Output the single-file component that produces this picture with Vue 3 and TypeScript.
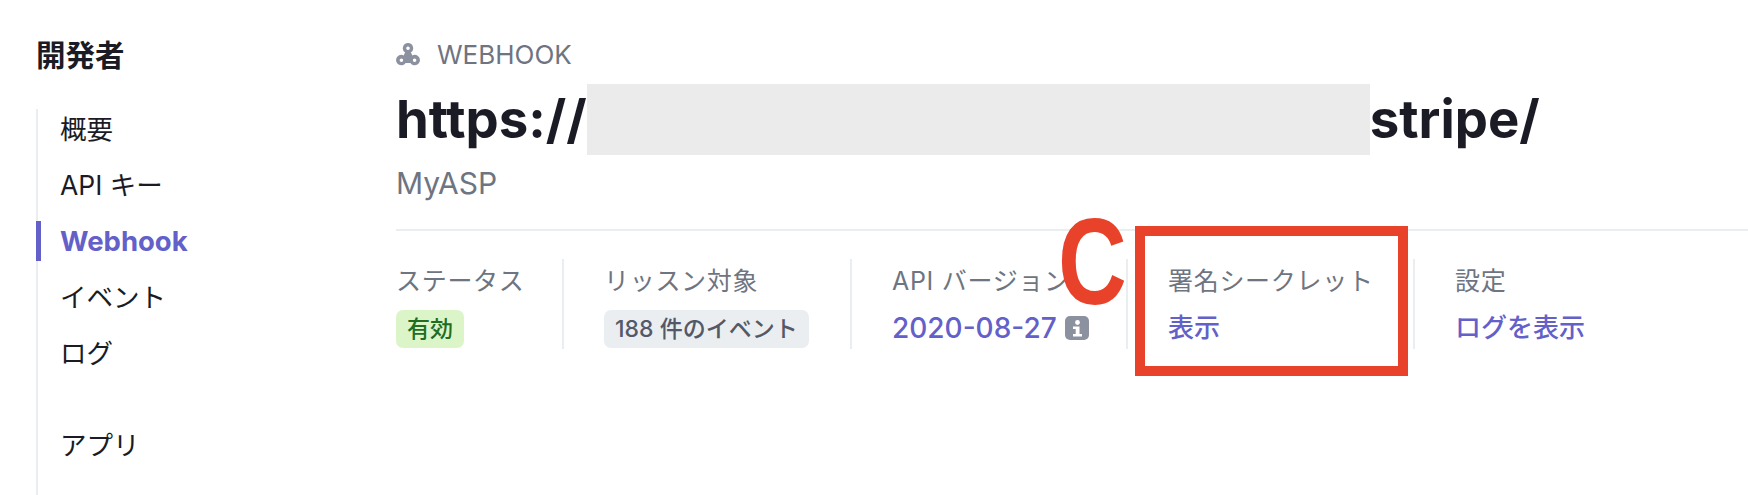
<script setup lang="ts">
interface NavItem { label: string; active?: boolean; gap?: boolean }
const nav: NavItem[] = [
  { label: '概要' },
  { label: 'API キー' },
  { label: 'Webhook', active: true },
  { label: 'イベント' },
  { label: 'ログ' },
  { label: 'アプリ', gap: true },
]
</script>

<template>
  <div class="page">
    <aside class="side">
      <h2 class="side-title">開発者</h2>
      <ul class="nav">
        <li v-for="n in nav" :key="n.label" :class="['nav-item', { active: n.active, gap: n.gap }]">{{ n.label }}</li>
      </ul>
    </aside>
    <main class="main">
      <div class="eyebrow">
        <svg class="hook" viewBox="0 0 24 24" width="24" height="24" aria-hidden="true">
          <path fill="#8b919e" fill-rule="evenodd" d="M12 1a5.2 5.2 0 0 1 2.9 9.5l1.5 2.9a5.2 5.2 0 1 1-2 7.6H9.6a5.2 5.2 0 1 1-2-7.6l1.5-2.9A5.2 5.2 0 0 1 12 1zm0 3.4a1.8 1.8 0 1 0 0 3.6 1.8 1.8 0 0 0 0-3.6zM5.4 16.4a1.8 1.8 0 1 0 0 3.6 1.8 1.8 0 0 0 0-3.6zm13.2 0a1.8 1.8 0 1 0 0 3.6 1.8 1.8 0 0 0 0-3.6z"/>
        </svg>
        <span>WEBHOOK</span>
      </div>
      <h1 class="title">https://<span class="redact"></span>stripe/</h1>
      <div class="sub">MyASP</div>
      <div class="stats">
        <div class="stat">
          <div class="label">ステータス</div>
          <div class="value"><span class="badge green">有効</span></div>
        </div>
        <div class="stat">
          <div class="label">リッスン対象</div>
          <div class="value"><span class="badge gray">188 件のイベント</span></div>
        </div>
        <div class="stat">
          <div class="label">API バージョン</div>
          <div class="value link num">2020-08-27
            <svg class="info" viewBox="0 0 24 24" width="24" height="24" aria-hidden="true">
              <rect width="24" height="24" rx="5" fill="#8b919e"/>
              <circle cx="12.5" cy="6.5" r="2.4" fill="#fff"/>
              <path fill="#fff" d="M8 10.5h6.5V18H17v2.5H8V18h2.7v-5H8z"/>
            </svg>
          </div>
        </div>
        <div class="stat">
          <div class="label">署名シークレット</div>
          <div class="value link">表示</div>
        </div>
        <div class="stat last">
          <div class="label">設定</div>
          <div class="value link">ログを表示</div>
        </div>
      </div>
    </main>
    <div class="callout-box"></div>
    <div class="callout-letter">C</div>
  </div>
</template>

<style>
html, body { margin: 0; background: #fff; }
</style>

<style scoped>
.page {
  position: relative;
  display: flex;
  width: 1748px;
  height: 495px;
  overflow: hidden;
  background: #fff;
  font-family: Inter, "Noto Sans CJK JP", sans-serif;
}
.side { width: 360px; padding-left: 36px; flex: none; display: flex; flex-direction: column; }
.side-title {
  margin: 36px 0 0;
  font-size: 29.5px;
  line-height: 38px;
  font-weight: 700;
  color: #1a1b25;
}
.nav {
  list-style: none;
  margin: 35px 0 0;
  padding: 0;
  flex: 1;
  border-left: 2px solid #ebeef1;
}
.nav-item {
  height: 56px;
  line-height: 40px;
  padding-left: 22px;
  margin-left: -2px;
  border-left: 2px solid transparent;
  font-size: 26.5px;
  color: #1a1b25;
  position: relative;
}
.nav-item.active { color: #6360c9; font-weight: 700; font-size: 27.5px; }
.nav-item.active::before {
  content: "";
  position: absolute;
  left: -2px;
  top: 0;
  width: 5px;
  height: 40px;
  background: #6360c9;
}
.nav-item.gap { margin-top: 36px; }
.main { flex: 1; min-width: 0; }
.eyebrow {
  display: flex;
  align-items: center;
  gap: 17px;
  margin-top: 39px;
  height: 30px;
  font-size: 26px;
  color: #6e7480;
}
.hook { flex: none; }
.title {
  margin: 15px 0 0;
  height: 71px;
  font-size: 52.7px;
  line-height: 71px;
  font-weight: 700;
  color: #1a1b25;
  white-space: nowrap;
}
.redact {
  display: inline-block;
  width: 783px;
  height: 71px;
  vertical-align: top;
  background: #ebebeb;
}
.sub { margin-top: 10px; font-size: 30px; line-height: 36px; color: #6e7480; }
.stats {
  display: grid;
  grid-template-columns: 168px 288px 276px 287px 1fr;
  margin-top: 28px;
  padding-top: 28px;
  border-top: 2px solid #ebeef1;
}
.stat {
  height: 90px;
  padding-left: 40px;
  padding-top: 2px;
  box-sizing: border-box;
  border-right: 2px solid #ebeef1;
}
.stat:first-child { padding-left: 0; }
.stat.last { border-right: 0; }
.label { font-size: 25px; line-height: 40px; color: #6e7480; letter-spacing: 0.7px; white-space: nowrap; }
.value { margin-top: 9px; font-size: 26px; line-height: 36px; display: flex; align-items: center; white-space: nowrap; }
.link { color: #6360c9; font-weight: 500; }
.num { gap: 8px; font-size: 28px; }
.info { flex: none; }
.badge { border-radius: 7px; font-size: 23px; line-height: 38px; padding: 0 11px; font-weight: 500; }
.green { background: #dcf5c8; color: #216e1f; }
.gray { background: #ebeef1; color: #545969; }
.callout-box {
  position: absolute;
  left: 1135px;
  top: 226px;
  width: 273px;
  height: 150px;
  box-sizing: border-box;
  border: 10px solid #e8432a;
}
.callout-letter {
  position: absolute;
  left: 1058px;
  top: 192px;
  font-family: "Liberation Sans", sans-serif;
  font-weight: 700;
  font-size: 122px;
  line-height: 140px;
  color: #e8432a;
  transform: scaleX(0.78);
  transform-origin: left center;
}
</style>
